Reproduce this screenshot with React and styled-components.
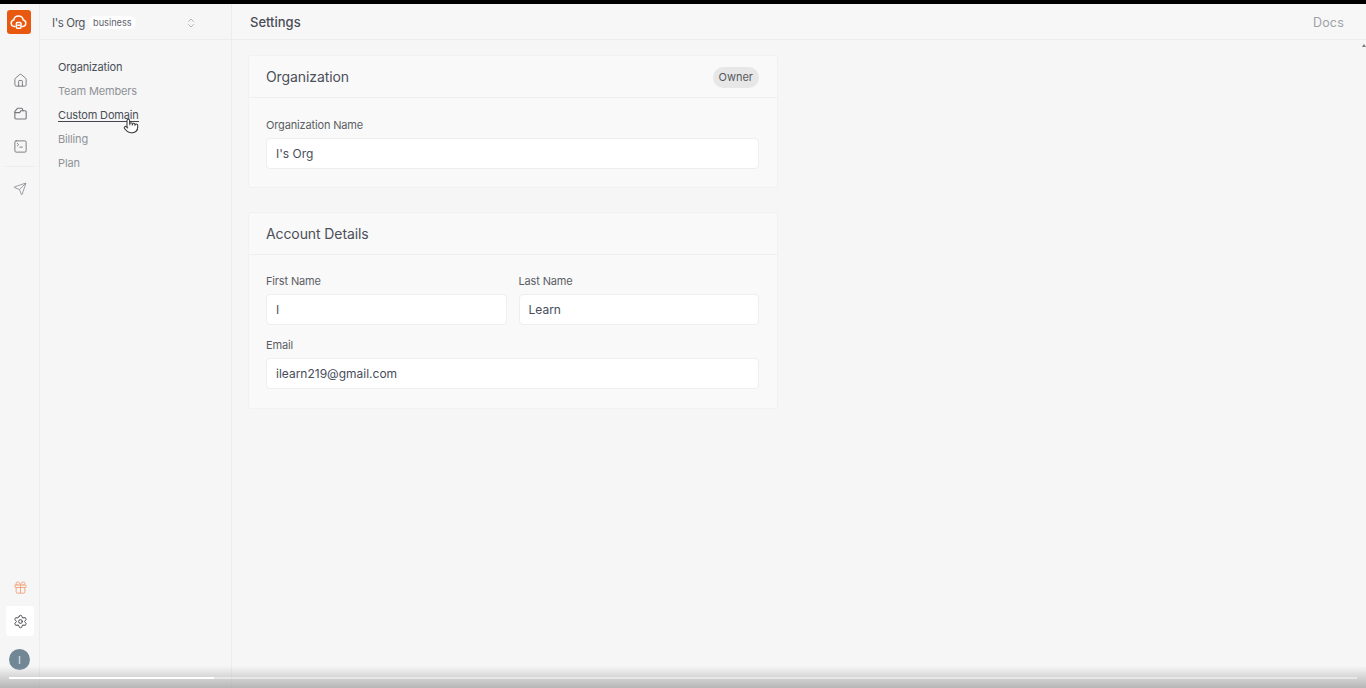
import React from 'react';
import styled, { createGlobalStyle } from 'styled-components';
import { Home, SquareTerminal, Send, Gift, Settings, ChevronsUpDown, Pointer } from 'lucide-react';

const GlobalStyle = createGlobalStyle`
    html, body {
        margin: 0;
        padding: 0;
        height: 100%;
        overflow: hidden;
        background: #f6f6f6;
        font-family: 'Inter', 'Open Sans', sans-serif;
    }
    * {
        box-sizing: border-box;
    }
`;

const Page = styled.div`
    position: relative;
    width: 1366px;
    height: 688px;
    overflow: hidden;
    border-top: 4px solid #000;
    display: flex;
    background: #f6f6f6;
    color: #3f4450;
`;

const Rail = styled.nav`
    width: 40px;
    flex: none;
    display: flex;
    flex-direction: column;
    align-items: center;
    border-right: 1px solid #ececec;
    padding-top: 6px;
`;

const Logo = styled.div`
    width: 24px;
    height: 24px;
    border-radius: 3px;
    background: #e8590f;
    color: #fff;
    display: flex;
    align-items: center;
    justify-content: center;
    margin-left: -2px;
    margin-bottom: 30px;
`;

const RailItem = styled.div`
    height: ${(p) => p.$height || 33}px;
    margin-left: 1px;
    display: flex;
    align-items: center;
    justify-content: center;
    color: ${(p) => p.$color || '#77797e'};
`;

const RailRule = styled.div`
    width: 30px;
    height: 1px;
    background: #ededed;
    margin: 3px 0 9px;
`;

const Spacer = styled.div`
    flex: 1;
`;

const SettingsButton = styled.div`
    width: 28px;
    height: 30px;
    border-radius: 3px;
    background: #fff;
    color: #44474d;
    display: flex;
    align-items: center;
    justify-content: center;
    padding-left: 1px;
    margin: 2px 0 13px;
`;

const Avatar = styled.div`
    width: 21px;
    height: 21px;
    border-radius: 50%;
    background: #718796;
    color: #dbe6ec;
    font-size: 11px;
    display: flex;
    align-items: center;
    justify-content: center;
    margin-bottom: 18px;
`;

const SidePanel = styled.aside`
    width: 192px;
    flex: none;
    border-right: 1px solid #ececec;
`;

const OrgSwitch = styled.div`
    height: 36px;
    display: flex;
    align-items: center;
    padding: 2px 34px 0 12px;
    border-bottom: 1px solid #ededed;
`;

const OrgName = styled.span`
    font-size: 11.5px;
    letter-spacing: -0.4px;
    color: #50555c;
`;

const PlanTag = styled.span`
    margin-left: 4px;
    padding: 0 4px;
    height: 13px;
    line-height: 13px;
    border-radius: 7px;
    background: #fff;
    font-size: 9.2px;
    color: #5d626b;
`;

const SwitchIcon = styled.span`
    margin-left: auto;
    display: flex;
    color: #a0a0a0;
`;

const SideMenu = styled.ul`
    list-style: none;
    margin: 0;
    padding: 15px 0 0 18px;
`;

const SideLink = styled.li`
    height: 24px;
    line-height: 24px;
    font-size: 11px;
    letter-spacing: -0.15px;
    color: ${(p) => (p.$active || p.$hover ? '#4a4e57' : '#8f9297')};
    span {
        display: inline-block;
        line-height: 11px;
        border-bottom: ${(p) => (p.$hover ? '1px solid #44474d' : 'none')};
    }
`;

const Main = styled.main`
    flex: 1;
    min-width: 0;
`;

const Header = styled.header`
    height: 36px;
    display: flex;
    align-items: center;
    justify-content: space-between;
    padding: 1px 22px 0 18px;
    border-bottom: 1px solid #ededed;
    background: #f7f7f7;
`;

const PageTitle = styled.h1`
    margin: 0;
    font-size: 13px;
    font-weight: 500;
    color: #4a4d55;
`;

const DocsLink = styled.span`
    font-size: 12.5px;
    letter-spacing: 0.2px;
    color: #a0a2a8;
`;

const Content = styled.div`
    padding: 15px 0 0 16px;
    display: flex;
    flex-direction: column;
    gap: 24px;
`;

const Card = styled.section`
    width: 530px;
    background: #f9f9f9;
    border: 1px solid #f1f1f1;
    border-radius: 3px;
`;

const CardHead = styled.div`
    height: 42px;
    display: flex;
    align-items: center;
    justify-content: space-between;
    padding: 0 18px 0 17px;
    border-bottom: 1px solid #efefef;
`;

const CardTitle = styled.h2`
    margin: 0;
    font-size: 14px;
    font-weight: 400;
    letter-spacing: -0.1px;
    color: #4c5059;
`;

const RoleBadge = styled.span`
    height: 21px;
    margin-top: 1px;
    padding: 0 6px;
    border-radius: 11px;
    background: #e7e7e7;
    font-size: 11px;
    line-height: 21px;
    color: #565a60;
`;

const CardBody = styled.div`
    padding: ${(p) => p.$top}px 18px ${(p) => p.$bottom}px 17px;
    display: flex;
    flex-direction: column;
    gap: 12px;
`;

const FieldRow = styled.div`
    display: flex;
    gap: 12px;
`;

const Field = styled.label`
    flex: 1;
    min-width: 0;
    display: block;
`;

const FieldLabel = styled.div`
    height: 21px;
    line-height: 17px;
    font-size: 11px;
    letter-spacing: -0.15px;
    color: #5b5e64;
`;

const TextInput = styled.input`
    display: block;
    width: 100%;
    height: 31px;
    padding: 0 9px;
    border: 1px solid #eeeeee;
    border-radius: 4px;
    background: #fff;
    font-family: inherit;
    font-size: 12px;
    color: #474d5a;
    outline: none;
`;

const HandCursor = styled.div`
    position: absolute;
    left: 123px;
    top: 114px;
    color: #3f3f3f;
    display: flex;
`;

const ScrollArrow = styled.div`
    position: absolute;
    right: 0;
    top: 40px;
    width: 0;
    height: 0;
    border-left: 2.5px solid transparent;
    border-right: 2.5px solid transparent;
    border-bottom: 3px solid #77797c;
`;

const BottomShade = styled.div`
    position: absolute;
    left: 0;
    right: 0;
    bottom: 0;
    height: 22px;
    padding: 0 9px;
    display: flex;
    flex-direction: column;
    justify-content: flex-end;
    background: linear-gradient(to bottom, rgba(170, 170, 170, 0), rgba(170, 170, 170, 0.85));
`;

const ProgressTrack = styled.div`
    height: 2px;
    margin-bottom: 9px;
    background: rgba(255, 255, 255, 0.45);
`;

const ProgressFill = styled.div`
    height: 100%;
    background: #fff;
`;

const menu = ['Organization', 'Team Members', 'Custom Domain', 'Billing', 'Plan'];

// cloud with a small box hanging under it
const LogoMark = () => (
    <svg width="17" height="17" viewBox="0 0 24 24" fill="none" stroke="currentColor" strokeWidth="2.1" strokeLinecap="round" strokeLinejoin="round">
        <path d="M7 17.5H6a4.5 4.5 0 0 1-.7-8.9 6.8 6.8 0 0 1 13.4 0 4.5 4.5 0 0 1-.7 8.9h-1" />
        <rect x="9" y="12" width="6.5" height="8" rx="1.2" />
        <path d="M11 16h2.5" />
    </svg>
);

// folder with its flap folded over the top left
const FolderMark = () => (
    <svg width="15" height="15" viewBox="0 0 24 24" fill="none" stroke="currentColor" strokeWidth="1.8" strokeLinecap="round" strokeLinejoin="round">
        <path d="M3 19V8.5L7.5 3.5h6.2a1 1 0 0 1 .9.6L16 7.5h3.5a1.6 1.6 0 0 1 1.6 1.6v10a1.6 1.6 0 0 1-1.6 1.6H4.6A1.6 1.6 0 0 1 3 19Z" />
        <path d="M3 10.5h7.5L13 7.5h3" />
    </svg>
);

function App() {
    return (
        <Page>
            <GlobalStyle />
            <Rail>
                <Logo>
                    <LogoMark />
                </Logo>
                <RailItem>
                    <Home size={15} strokeWidth={1.5} />
                </RailItem>
                <RailItem>
                    <FolderMark />
                </RailItem>
                <RailItem>
                    <SquareTerminal size={15} strokeWidth={1.5} />
                </RailItem>
                <RailRule />
                <RailItem $height={26} $color="#909296">
                    <Send size={14} strokeWidth={1.5} />
                </RailItem>
                <Spacer />
                <RailItem $color="#f3a27c">
                    <Gift size={15} strokeWidth={1.5} />
                </RailItem>
                <SettingsButton>
                    <Settings size={15} strokeWidth={1.6} />
                </SettingsButton>
                <Avatar>I</Avatar>
            </Rail>

            <SidePanel>
                <OrgSwitch>
                    <OrgName>I's Org</OrgName>
                    <PlanTag>business</PlanTag>
                    <SwitchIcon>
                        <ChevronsUpDown size={12} strokeWidth={1.5} />
                    </SwitchIcon>
                </OrgSwitch>
                <SideMenu>
                    {menu.map((item, i) => (
                        <SideLink key={item} $active={i === 0} $hover={i === 2}>
                            <span>{item}</span>
                        </SideLink>
                    ))}
                </SideMenu>
            </SidePanel>

            <Main>
                <Header>
                    <PageTitle>Settings</PageTitle>
                    <DocsLink>Docs</DocsLink>
                </Header>
                <Content>
                    <Card>
                        <CardHead>
                            <CardTitle>Organization</CardTitle>
                            <RoleBadge>Owner</RoleBadge>
                        </CardHead>
                        <CardBody $top={19} $bottom={18}>
                            <Field>
                                <FieldLabel>Organization Name</FieldLabel>
                                <TextInput defaultValue="I's Org" />
                            </Field>
                        </CardBody>
                    </Card>
                    <Card>
                        <CardHead>
                            <CardTitle>Account Details</CardTitle>
                        </CardHead>
                        <CardBody $top={18} $bottom={19}>
                            <FieldRow>
                                <Field>
                                    <FieldLabel>First Name</FieldLabel>
                                    <TextInput defaultValue="I" />
                                </Field>
                                <Field>
                                    <FieldLabel>Last Name</FieldLabel>
                                    <TextInput defaultValue="Learn" />
                                </Field>
                            </FieldRow>
                            <Field>
                                <FieldLabel>Email</FieldLabel>
                                <TextInput defaultValue="ilearn219@gmail.com" />
                            </Field>
                        </CardBody>
                    </Card>
                </Content>
            </Main>

            <HandCursor>
                <Pointer size={16} strokeWidth={1.6} fill="#fff" />
            </HandCursor>
            <ScrollArrow />
            <BottomShade>
                <ProgressTrack>
                    <ProgressFill style={{ width: `${(205 / 1348) * 100}%` }} />
                </ProgressTrack>
            </BottomShade>
        </Page>
    );
}

export default App;
